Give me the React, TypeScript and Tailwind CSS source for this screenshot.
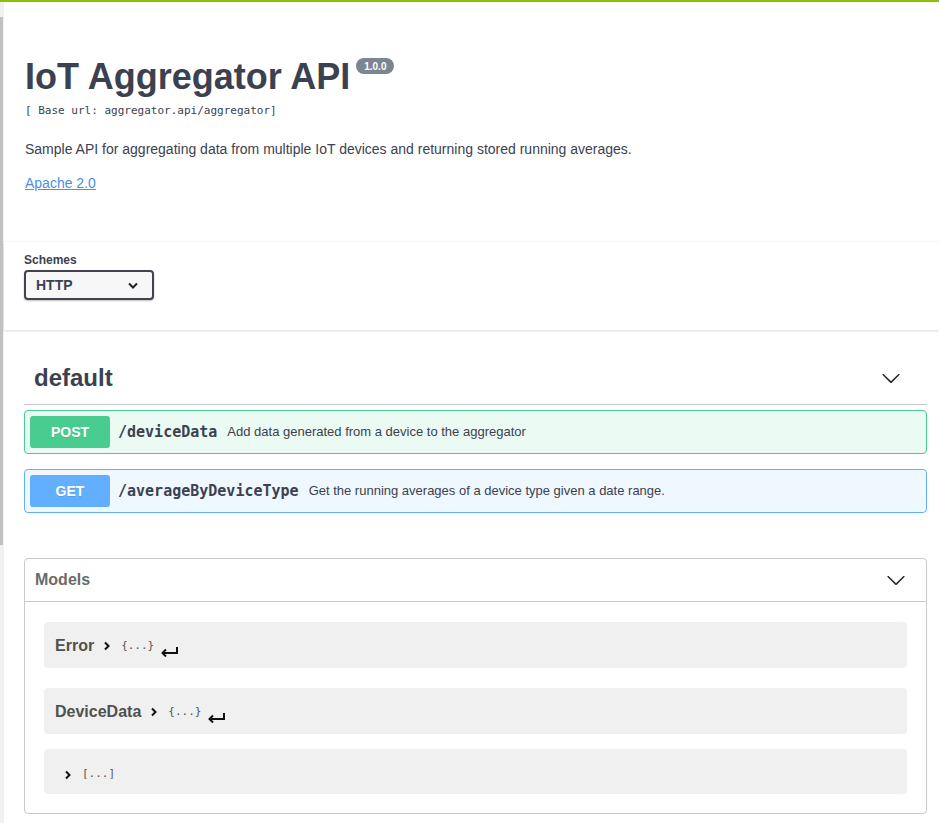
import React from "react";

const Chevron = () => (
  <svg width="20" height="20" viewBox="0 0 20 20" className="shrink-0">
    <path
      fill="#222"
      d="M17.418 6.109c.272-.268.709-.268.979 0s.271.701 0 .969l-7.908 7.83c-.27.268-.707.268-.979 0l-7.908-7.83c-.27-.268-.27-.701 0-.969.271-.268.709-.268.979 0L10 13.25l7.418-7.141z"
    />
  </svg>
);

const SmallRight = () => (
  <svg width="8" height="10" viewBox="0 0 8 10" className="shrink-0">
    <path d="M2 1.5L5.5 5 2 8.5" fill="none" stroke="#111" strokeWidth="2" />
  </svg>
);

const ReturnArrow = () => (
  <svg width="19" height="12" viewBox="0 0 19 12" className="shrink-0 translate-y-[5px]">
    <path d="M17 2v6H3" fill="none" stroke="#111" strokeWidth="2" />
    <path d="M6 4.5L2.5 8 6 11.5" fill="none" stroke="#111" strokeWidth="2" />
  </svg>
);

const mono = "font-['DejaVu_Sans_Mono','Liberation_Mono',monospace]";

function Op({
  method,
  path,
  desc,
  border,
  bg,
  badge,
}: {
  method: string;
  path: string;
  desc: string;
  border: string;
  bg: string;
  badge: string;
}) {
  return (
    <div className={`flex items-center p-[5px] rounded-[4px] border ${border} ${bg}`}>
      <div
        className={`w-[80px] h-[32px] rounded-[3px] ${badge} text-white font-bold text-[14px] flex items-center justify-center [text-shadow:0_1px_0_rgba(0,0,0,0.1)]`}
      >
        {method}
      </div>
      <span className={`${mono} font-bold text-[15px] ml-[8px] text-[#3b4151]`}>{path}</span>
      <span className="text-[13px] ml-[10px] text-[#3b4151]">{desc}</span>
    </div>
  );
}

export default function App() {
  return (
    <div className="min-h-[823px] bg-white font-['Liberation_Sans',Arial,sans-serif] text-[#3b4151] overflow-hidden">
      <div className="h-[2px] bg-[#89bf04]" />
      <div className="flex min-h-[821px]">
        <div className="w-[4px] shrink-0 bg-[#f1f1f1] flex flex-col">
          <div className="h-[15px]" />
          <div className="h-[528px] w-[3px] bg-[#c1c1c1]" />
        </div>
        <div className="flex-1 min-w-0">
          {/* info */}
          <div className="pl-[21px] pr-[12px] pt-[54px]">
            <div className="flex items-start">
              <h2 className="text-[36px] leading-[41px] font-bold text-[#3b4151]">IoT Aggregator API</h2>
              <span className="ml-[6px] mt-[2px] h-[16px] w-[38px] rounded-full bg-[#7d8492] text-white text-[10px] font-bold flex items-center justify-center">
                1.0.0
              </span>
            </div>
            <div className={`${mono} text-[11px] leading-[16px] mt-[6px] text-[#3b4151]`}>
              [ Base url: aggregator.api/aggregator]
            </div>
            <p className="text-[14px] leading-[20px] mt-[20px]">
              Sample API for aggregating data from multiple IoT devices and returning stored running averages.
            </p>
            <a className="block w-fit text-[14px] leading-[20px] mt-[14px] text-[#4990e2] underline" href="#">
              Apache 2.0
            </a>
          </div>

          {/* schemes */}
          <div className="mt-[48px] border-t border-[#f6f6f6] pt-[10px] pb-[30px] pl-[20px] shadow-[0_1px_2px_0_rgba(0,0,0,0.15)]">
            <div className="text-[12px] leading-[16px] font-bold text-[#3b4151]">Schemes</div>
            <div className="mt-[2px] w-[130px] h-[30px] border-2 border-[#41444e] rounded-[4px] bg-[#f7f7f7] shadow-[0_1px_2px_0_rgba(0,0,0,0.25)] flex items-center justify-between pl-[10px] pr-[14px]">
              <span className="text-[14px] font-bold text-[#3b4151]">HTTP</span>
              <svg width="10" height="7" viewBox="0 0 10 7">
                <path d="M1 1.5l4 4 4-4" fill="none" stroke="#222" strokeWidth="2" />
              </svg>
            </div>
          </div>

          {/* default tag */}
          <div className="pl-[20px] pr-[12px] mt-[21px]">
            <div className="h-[54px] flex items-center justify-between pl-[10px] pr-[26px] border-b border-[#c4c6cb]">
              <h4 className="text-[24px] font-bold text-[#3b4151]">default</h4>
              <Chevron />
            </div>
            <div className="mt-[5px] flex flex-col gap-[15px]">
              <Op
                method="POST"
                path="/deviceData"
                desc="Add data generated from a device to the aggregator"
                border="border-[#49cc90]"
                bg="bg-[rgba(73,204,144,0.1)]"
                badge="bg-[#49cc90]"
              />
              <Op
                method="GET"
                path="/averageByDeviceType"
                desc="Get the running averages of a device type given a date range."
                border="border-[#61affe]"
                bg="bg-[rgba(97,175,254,0.1)]"
                badge="bg-[#61affe]"
              />
            </div>

            {/* models */}
            <div className="mt-[45px] border border-[#c8c9cc] rounded-[4px] mb-[20px]">
              <div className="h-[43px] flex items-center justify-between pl-[10px] pr-[20px] border-b border-[#c8c9cc]">
                <h4 className="text-[16px] font-bold text-[#6b6b6b]">Models</h4>
                <Chevron />
              </div>
              <div className="px-[19px] pt-[20px] pb-[19px] flex flex-col">
                <div className="h-[46px] rounded-[4px] bg-[#f0f0f0] flex items-center pl-[11px] pt-[2px]">
                  <span className="text-[16px] font-bold text-[#505050]">Error</span>
                  <span className="ml-[9px]">
                    <SmallRight />
                  </span>
                  <span className={`${mono} text-[11px] ml-[10px] text-[#555]`}>{"{...}"}</span>
                  <span className="ml-[6px]">
                    <ReturnArrow />
                  </span>
                </div>
                <div className="mt-[20px] h-[46px] rounded-[4px] bg-[#f0f0f0] flex items-center pl-[11px] pt-[2px]">
                  <span className="text-[16px] font-bold text-[#505050]">DeviceData</span>
                  <span className="ml-[9px]">
                    <SmallRight />
                  </span>
                  <span className={`${mono} text-[11px] ml-[10px] text-[#555]`}>{"{...}"}</span>
                  <span className="ml-[6px]">
                    <ReturnArrow />
                  </span>
                </div>
                <div className="mt-[15px] h-[45px] rounded-[4px] bg-[#f0f0f0] flex items-center pl-[20px] pt-[6px]">
                  <SmallRight />
                  <span className={`${mono} text-[11px] ml-[10px] text-[#555]`}>[...]</span>
                </div>
              </div>
            </div>
          </div>
        </div>
      </div>
    </div>
  );
}
